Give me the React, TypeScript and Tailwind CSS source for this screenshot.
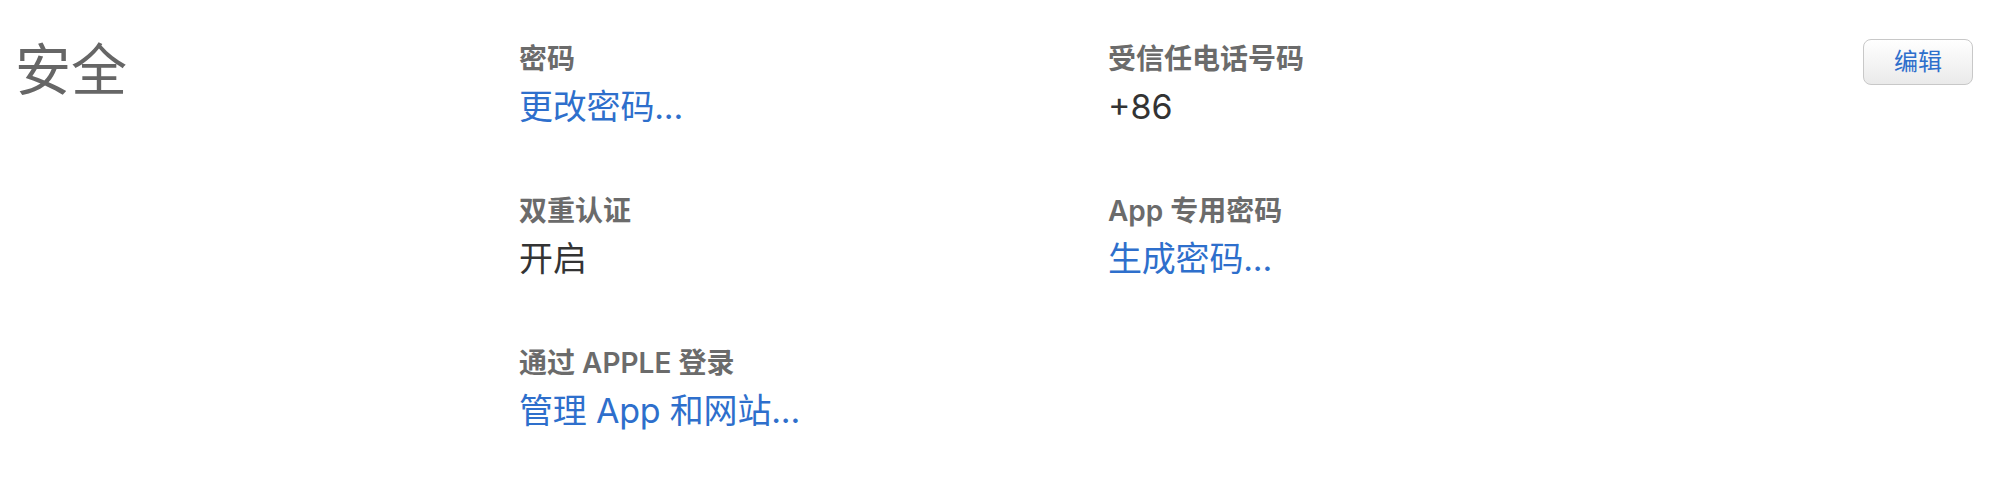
import React from 'react'

type Item = {
  label: string
  value: string
  link?: boolean
}

const items: Item[] = [
  { label: '密码', value: '更改密码...', link: true },
  { label: '受信任电话号码', value: '+86' },
  { label: '双重认证', value: '开启' },
  { label: 'App 专用密码', value: '生成密码...', link: true },
  { label: '通过 APPLE 登录', value: '管理 App 和网站...', link: true },
]

const font = { fontFamily: 'Inter, "Noto Sans CJK SC", sans-serif' }

export default function App() {
  return (
    <div className="w-[2000px] h-[488px] bg-white" style={font}>
      <div className="flex items-start pl-[15px] pr-[27px] pt-[39px]">
        {/* Section title */}
        <div className="w-[504px] shrink-0 mt-[3px] text-[56px] leading-[56px] text-[#666666]">
          安全
        </div>

        {/* Fields */}
        <div className="grid grid-cols-[589px_auto] gap-y-[66px] mt-[3px]">
          {items.map((item) => (
            <div key={item.label} className="flex flex-col">
              <div className="text-[28px] leading-[34px] font-semibold text-[#6b6b6b]">
                {item.label}
              </div>
              <div
                className={
                  item.link
                    ? 'mt-[10px] text-[34px] leading-[42px] tracking-[-0.2px] text-[#2e6fcc] cursor-pointer'
                    : 'mt-[10px] text-[34px] leading-[42px] text-[#333333]'
                }
              >
                {item.value}
              </div>
            </div>
          ))}
        </div>

        {/* Edit button */}
        <button className="ml-auto w-[110px] h-[46px] rounded-[8px] border-[1.5px] border-[#c8c8c8] bg-gradient-to-b from-white to-[#eaeaea] text-[24px] leading-none text-[#2e6fcc]">
          编辑
        </button>
      </div>
    </div>
  )
}
